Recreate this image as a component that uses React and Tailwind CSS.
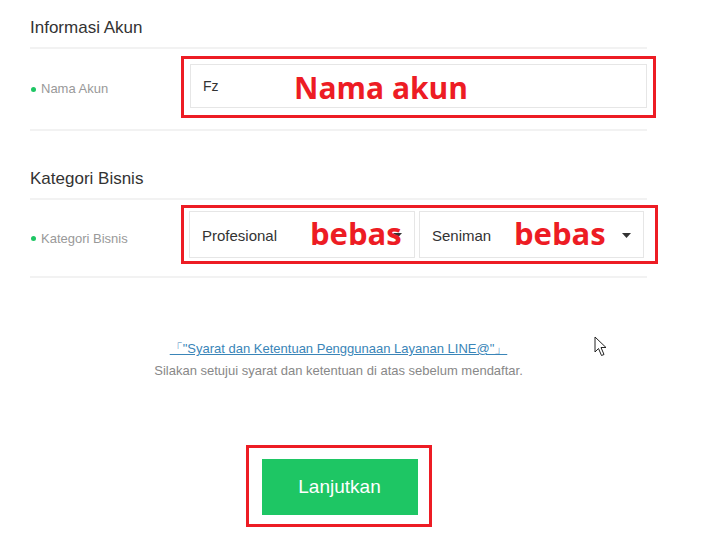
import React from "react";

const font = { fontFamily: '"Liberation Sans", Arial, sans-serif' };

function Caret() {
  return (
    <svg width="9" height="5" viewBox="0 0 9 5" className="shrink-0">
      <path d="M0 0 L9 0 L4.5 5 Z" fill="#333" />
    </svg>
  );
}

function Label({ children }) {
  return (
    <div className="w-[160px] shrink-0 flex items-center gap-[5px] pl-[1px] text-[13px] text-[#999]">
      <span className="w-[5px] h-[5px] rounded-full bg-[#1ec664]"></span>
      {children}
    </div>
  );
}

function Note({ children, className }) {
  return (
    <span
      className={"relative z-10 text-[#ed1c24] font-bold leading-none " + className}
      style={{ fontFamily: '"Open Sans", "Noto Sans", sans-serif' }}
    >
      {children}
    </span>
  );
}

function Cursor() {
  return (
    <svg width="14" height="21" viewBox="0 0 14 21" className="absolute left-[594px] top-[336px]">
      <path
        d="M1 1 L1 16 L4.5 12.5 L7.5 19.5 L10 18.5 L7 11.5 L12 11.5 Z"
        fill="#fff"
        stroke="#222"
        strokeWidth="1"
        strokeLinejoin="round"
      />
    </svg>
  );
}

export default function App() {
  return (
    <div className="relative w-[712px] h-[545px] bg-white overflow-hidden" style={font}>
      <div className="ml-[30px] w-[617px] pt-[18px]">
        <h2 className="text-[17px] text-[#333] leading-[20px] pb-[9px]">Informasi Akun</h2>
        <div className="border-t-2 border-[#f2f2f2]"></div>
        <div className="flex items-center pt-[15px] pb-[21px]">
          <div className="w-[160px] shrink-0 pt-[6px]">
            <Label>Nama Akun</Label>
          </div>
          <div className="relative flex-1">
            <div className="absolute -left-[9px] -right-[9px] -top-[8px] -bottom-[10px] border-[3px] border-[#ed1c24]"></div>
            <div className="h-[44px] border border-[#e6e6e6] flex items-center pl-[12px] text-[14px] text-[#333]">
              <span className="w-[91px]">Fz</span>
              <Note className="text-[30px] pt-[3px]">Nama akun</Note>
            </div>
          </div>
        </div>
        <div className="border-t-2 border-[#f2f2f2]"></div>

        <h2 className="text-[17px] text-[#333] leading-[20px] pt-[38px] pb-[9px]">Kategori Bisnis</h2>
        <div className="border-t-2 border-[#f2f2f2]"></div>
        <div className="flex items-center pt-[11px] pb-[18px]">
          <div className="w-[159px] shrink-0 pt-[8px]">
            <Label>Kategori Bisnis</Label>
          </div>
          <div className="relative flex-1">
            <div className="absolute -left-[8px] -right-[11px] -top-[6px] -bottom-[6px] border-[3px] border-[#ed1c24]"></div>
            <div className="flex gap-[4px]">
              <div className="w-[226px] h-[47px] border border-[#e6e6e6] flex items-center pl-[12px] pr-[12px] pt-[4px] text-[15px] text-[#333]">
                <span className="w-[108px]">Profesional</span>
                <Note className="text-[31px] -mt-[6px] -mr-[10px]">bebas</Note>
                <span className="ml-auto -mt-[2px]"><Caret /></span>
              </div>
              <div className="w-[225px] h-[47px] border border-[#e6e6e6] flex items-center pl-[12px] pr-[12px] pt-[4px] text-[15px] text-[#333]">
                <span className="w-[82px]">Seniman</span>
                <Note className="text-[31px] -mt-[6px]">bebas</Note>
                <span className="ml-auto -mt-[2px]"><Caret /></span>
              </div>
            </div>
          </div>
        </div>
        <div className="border-t-2 border-[#f2f2f2]"></div>

        <div className="pt-[63px] flex flex-col items-center">
          <a className="text-[13px] text-[#3a85b8] underline leading-[16px]" href="#">
            「"Syarat dan Ketentuan Penggunaan Layanan LINE@"」
          </a>
          <p className="mt-[6px] text-[13px] text-[#888] leading-[16px]">
            Silakan setujui syarat dan ketentuan di atas sebelum mendaftar.
          </p>
          <div className="mt-[66px] pt-[11px] pb-[9px] pl-[13px] pr-[11px] border-[3px] border-[#ed1c24]">
            <button className="block w-[156px] h-[56px] bg-[#1ec664] text-white text-[19px]">Lanjutkan</button>
          </div>
        </div>
      </div>
      <Cursor />
    </div>
  );
}
